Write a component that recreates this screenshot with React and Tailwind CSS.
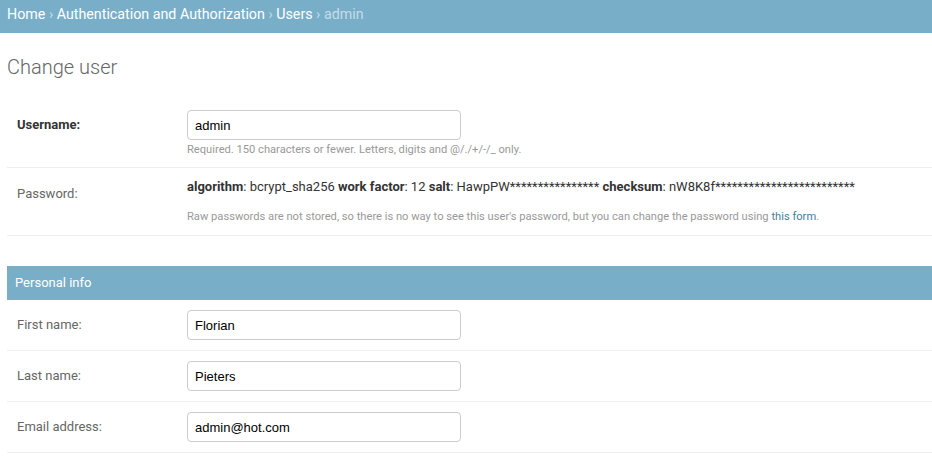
import React from "react";

function Row({ label, bold, children }) {
  return (
    <div className="flex border-b border-[#eeeeee] py-[10px] pl-[10px]">
      <div className={`w-[170px] shrink-0 text-[13px] leading-[30px] ${bold ? "font-bold text-[#333333]" : "text-[#666666]"}`}>
        {label}
      </div>
      <div className="flex-1">{children}</div>
    </div>
  );
}

function TextInput({ value }) {
  return (
    <input
      type="text"
      defaultValue={value}
      className="h-[30px] w-[274px] rounded-[4px] border border-[#cccccc] px-[7px] text-[13px] text-black outline-none"
      style={{ fontFamily: '"Liberation Sans", Arial, sans-serif' }}
    />
  );
}

export default function App() {
  return (
    <div className="min-h-screen w-full bg-white text-[#333333]" style={{ fontFamily: 'Roboto, "Liberation Sans", Arial, sans-serif' }}>
      {/* Breadcrumbs */}
      <div className="h-[33px] bg-[#79aec8] px-[7px] pt-[4px] text-[14.25px] leading-[20px] text-white">
        <a href="#">Home</a>
        <span className="text-[#c4dce8]"> › </span>
        <a href="#">Authentication and Authorization</a>
        <span className="text-[#c4dce8]"> › </span>
        <a href="#">Users</a>
        <span className="text-[#c4dce8]"> › admin</span>
      </div>

      <h1 className="mb-[21px] mt-[22px] px-[7px] text-[20px] font-light leading-[24px] text-[#666666]">Change user</h1>

      <div className="ml-[7px]">
        <Row label="Username:" bold>
          <TextInput value="admin" />
          <div className="mt-[3px] text-[11.15px] leading-[14px] text-[#999999]">
            Required. 150 characters or fewer. Letters, digits and @/./+/-/_ only.
          </div>
        </Row>

        <div className="flex border-b border-[#eeeeee] pb-[11px] pl-[10px] pt-[10px]">
          <div className="w-[170px] shrink-0 pt-[7px] text-[13px] leading-[18px] text-[#666666]">Password:</div>
          <div className="flex-1">
            <div className="text-[13px] leading-[18px] text-[#333333]">
              <strong>algorithm</strong>: bcrypt_sha256 <strong>work factor</strong>: 12 <strong>salt</strong>: HawpPW****************{" "}
              <strong>checksum</strong>: nW8K8f*************************
            </div>
            <div className="mt-[14px] text-[11.15px] leading-[14px] text-[#999999]">
              Raw passwords are not stored, so there is no way to see this user's password, but you can change the password using{" "}
              <a href="#" className="text-[#447e9b]">this form</a>.
            </div>
          </div>
        </div>

        <div className="mt-[30px] h-[34px] bg-[#79aec8] px-[8px] text-[13px] leading-[34px] text-white">Personal info</div>

        <Row label="First name:">
          <TextInput value="Florian" />
        </Row>
        <Row label="Last name:">
          <TextInput value="Pieters" />
        </Row>
        <Row label="Email address:">
          <TextInput value="admin@hot.com" />
        </Row>
      </div>
    </div>
  );
}
